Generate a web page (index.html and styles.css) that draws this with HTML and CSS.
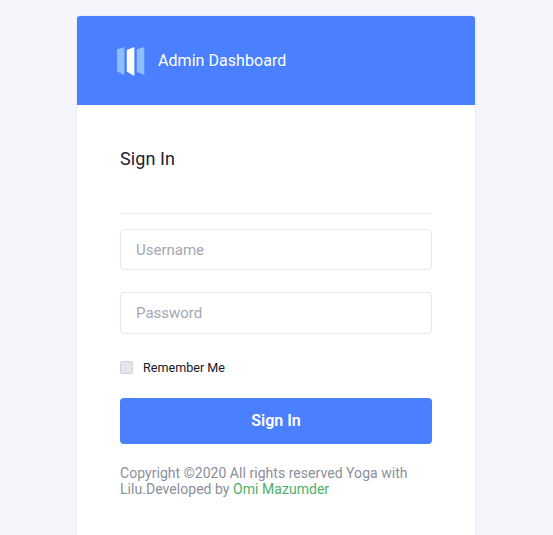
FILE: index.html
```html
<!DOCTYPE html>
<html>
<head>
	<title>Admin Dashboard</title>
	<link rel="stylesheet" href="styles.css">
</head>
<body>
	<div class="card">
		<div class="card-header">
			<svg class="logo" width="28" height="30" viewBox="0 0 28 30">
				<polygon points="0,3.2 7.3,1 7.3,29 0,25.5" fill="#8ebcff"/>
				<polygon points="9.8,4 17.3,1 17.3,30 9.8,25.5" fill="#ffffff"/>
				<polygon points="19.8,3.2 27.3,1 27.3,29 19.8,26" fill="#8ebcff"/>
			</svg>
			<span class="brand">Admin Dashboard</span>
		</div>
		<form class="card-body">
			<h4 class="title">Sign In</h4>
			<input class="field" type="text" placeholder="Username">
			<input class="field" type="password" placeholder="Password">
			<label class="remember">
				<span class="check"></span>
				Remember Me
			</label>
			<button class="submit" type="button">Sign In</button>
			<p class="copyright">Copyright ©2020 All rights reserved Yoga with Lilu.Developed by <a href="#">Omi Mazumder</a></p>
		</form>
	</div>
</body>
</html>
```
FILE: styles.css
```css
html, body {
	height: 100%;
}
body {
	font-family: Roboto, sans-serif;
	margin: 0;
	padding: 0;
	background-color: #f4f6fb;
	overflow: hidden;
}
.card {
	box-sizing: border-box;
	width: 400px;
	height: calc(100% - 15px);
	margin: 15px 0 0 76px;
	background-color: #fff;
	border: 1px solid #e9ecf4;
	border-bottom: none;
	border-radius: 4px 4px 0 0;
}
.card-header {
	display: flex;
	align-items: center;
	gap: 13px;
	height: 89px;
	padding-left: 40px;
	background-color: #4a80ff;
	border-radius: 3px 3px 0 0;
}
.brand {
	color: #fff;
	font-size: 16px;
	letter-spacing: 0.05px;
}
.card-body {
	display: flex;
	flex-direction: column;
	padding: 0 43px;
}
.title {
	margin: 0;
	padding: 43px 0 43px;
	height: 22px;
	line-height: 22px;
	font-size: 18px;
	font-weight: 400;
	letter-spacing: 0.1px;
	color: #1c2130;
	border-bottom: 1px solid #e8e9ef;
}
.field {
	box-sizing: border-box;
	width: 100%;
	height: 41px;
	margin-top: 15px;
	padding: 0 15px;
	font-family: Roboto, sans-serif;
	font-size: 15px;
	background-color: #fff;
	border: 1px solid #e6e8f0;
	border-radius: 4px;
}
.field + .field {
	margin-top: 22px;
	height: 42px;
}
.field::placeholder {
	color: #a3a8b4;
	opacity: 1;
}
.remember {
	display: flex;
	align-items: center;
	gap: 10px;
	margin-top: 26px;
	font-size: 12.6px;
	line-height: 15px;
	color: #15172b;
}
.check {
	box-sizing: border-box;
	width: 13px;
	height: 13px;
	background-color: #e4e6ec;
	border: 1px solid #cfd2da;
	border-radius: 2px;
}
.submit {
	height: 46px;
	margin-top: 23px;
	padding: 0 0 2px;
	font-family: Roboto, sans-serif;
	font-size: 16px;
	font-weight: 600;
	color: #fff;
	background-color: #4a80ff;
	border: none;
	border-radius: 4px;
}
.copyright {
	margin: 21px 0 0;
	font-size: 14px;
	line-height: 16px;
	letter-spacing: 0.04px;
	color: #8a8f9c;
}
.copyright a {
	color: #4dae68;
	text-decoration: none;
}
```
